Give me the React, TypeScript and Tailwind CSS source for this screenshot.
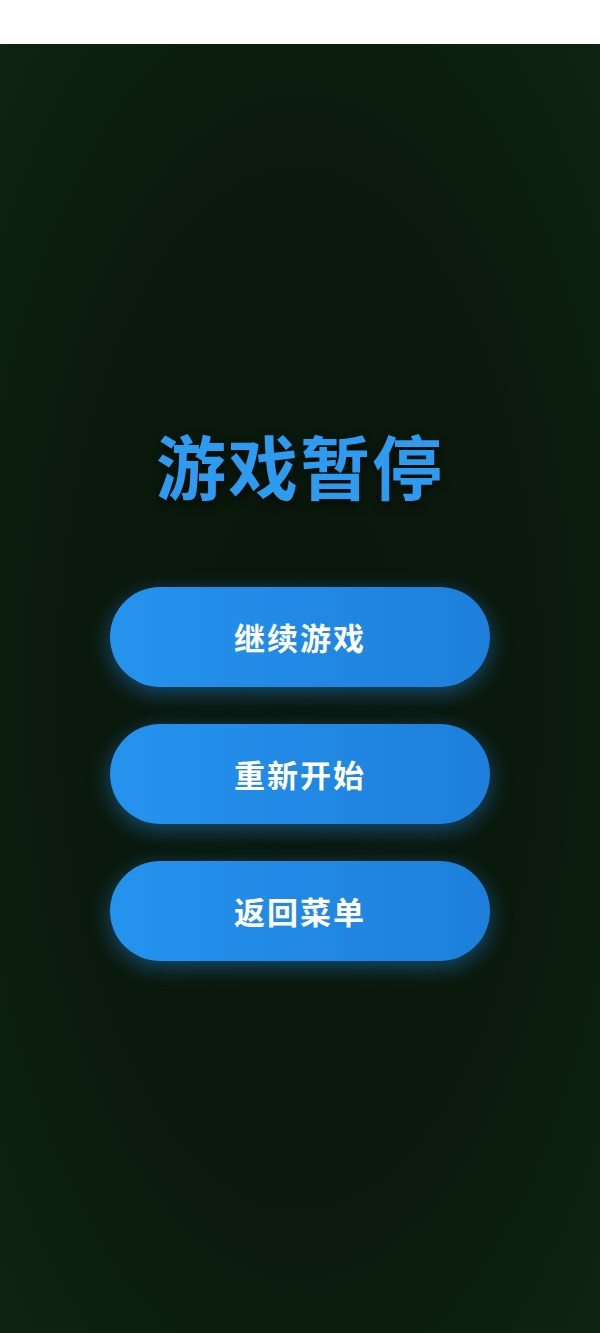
const buttons = ['继续游戏', '重新开始', '返回菜单'];

function App() {
  return (
    <div className="min-h-screen bg-white flex flex-col" style={{ fontFamily: '"Noto Sans CJK SC", "Noto Sans", sans-serif' }}>
      <div className="h-[44px] bg-white" />
      <main className="flex-1 min-h-[1289px] flex flex-col items-center pt-[386px] bg-[radial-gradient(ellipse_at_50%_50%,#0a160b_0%,#0b190c_55%,#0e2410_100%)]">
        <h1 className="text-[70px] leading-none font-bold text-[#2f9bf0] tracking-[2px] [text-shadow:0_4px_10px_rgba(0,0,0,0.6)]">
          游戏暂停
        </h1>
        <div className="mt-[87px] flex flex-col gap-[37px]">
          {buttons.map((label) => (
            <button
              key={label}
              className="w-[380px] h-[100px] rounded-full bg-gradient-to-r from-[#2593ee] to-[#1d7fdb] text-white text-[31px] font-bold tracking-[2px] shadow-[0_6px_22px_rgba(33,140,235,0.45)]"
            >
              {label}
            </button>
          ))}
        </div>
      </main>
    </div>
  );
}

export default App;
